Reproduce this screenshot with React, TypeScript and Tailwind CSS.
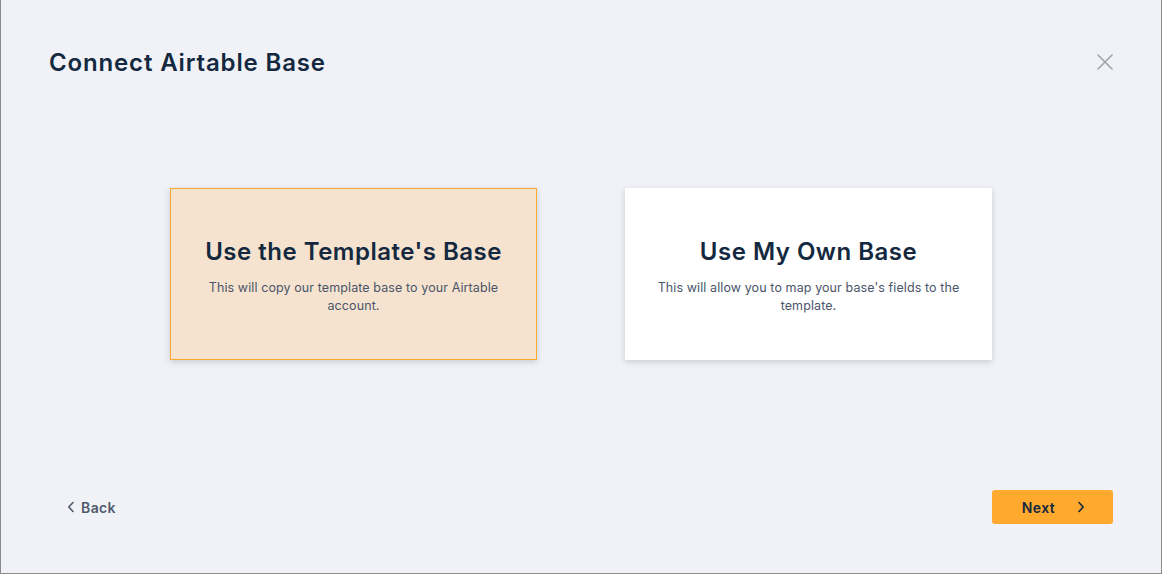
import React from "react";

function Chevron({ dir, className }: { dir: "left" | "right"; className?: string }) {
  return (
    <svg viewBox="0 0 8 12" className={className} fill="none" stroke="currentColor" strokeWidth="1.6" strokeLinecap="round" strokeLinejoin="round">
      {dir === "left" ? <path d="M6 1.5 L1.8 6 L6 10.5" /> : <path d="M2 1.5 L6.2 6 L2 10.5" />}
    </svg>
  );
}

export default function App() {
  const font = { fontFamily: "Inter, 'Noto Sans', 'Liberation Sans', sans-serif" };
  return (
    <div style={font} className="h-[574px] w-full bg-[#f0f2f7] border-l border-r border-b border-[#8c8c8c] flex flex-col">
      <div className="flex items-center justify-between pl-[48px] pr-[47px] pt-[47px]">
        <h1 className="text-[24px] leading-[32px] font-semibold text-[#14293f] tracking-[0.85px]">Connect Airtable Base</h1>
        <button className="w-[18px] h-[18px] -mt-[2px] text-[#9ea3ad]">
          <svg viewBox="0 0 18 18" className="w-[18px] h-[18px]" fill="none" stroke="currentColor" strokeWidth="1.6" strokeLinecap="round">
            <path d="M2 2 L16 16 M16 2 L2 16" />
          </svg>
        </button>
      </div>

      <div className="mt-[109px] flex justify-center gap-[88px]">
        <div className="w-[367px] h-[172px] bg-[#f5e3cf] border border-[#f7aa2e] shadow-[0_2px_6px_rgba(60,70,100,0.22)] flex flex-col items-center justify-center px-[28px] pt-[3px] text-center">
          <div className="text-[24px] leading-[30px] font-semibold text-[#14293f] tracking-[0.5px]">Use the Template's Base</div>
          <p className="mt-[12px] text-[12.5px] leading-[18px] text-[#4b556a] tracking-[0.1px]">This will copy our template base to your Airtable account.</p>
        </div>
        <div className="w-[367px] h-[172px] bg-white shadow-[0_2px_6px_rgba(60,70,100,0.22)] flex flex-col items-center justify-center px-[28px] pt-[3px] text-center">
          <div className="text-[24px] leading-[30px] font-semibold text-[#14293f] tracking-[0.5px]">Use My Own Base</div>
          <p className="mt-[12px] text-[12.5px] leading-[18px] text-[#4b556a] tracking-[0.1px]">This will allow you to map your base's fields to the template.</p>
        </div>
      </div>

      <div className="mt-[130px] flex items-center justify-between pl-[66px] pr-[48px]">
        <button className="flex items-center gap-[6px] text-[#4f5a6e] text-[14px] font-semibold tracking-[0.4px]">
          <Chevron dir="left" className="w-[8px] h-[12px]" />
          <span>Back</span>
        </button>
        <button className="w-[121px] h-[34px] rounded-[3px] bg-[#ffa92e] flex items-center justify-center gap-[22px] pl-[2px] text-[#14293f] text-[14px] font-semibold tracking-[0.4px]">
          <span>Next</span>
          <Chevron dir="right" className="w-[8px] h-[12px]" />
        </button>
      </div>
    </div>
  );
}
